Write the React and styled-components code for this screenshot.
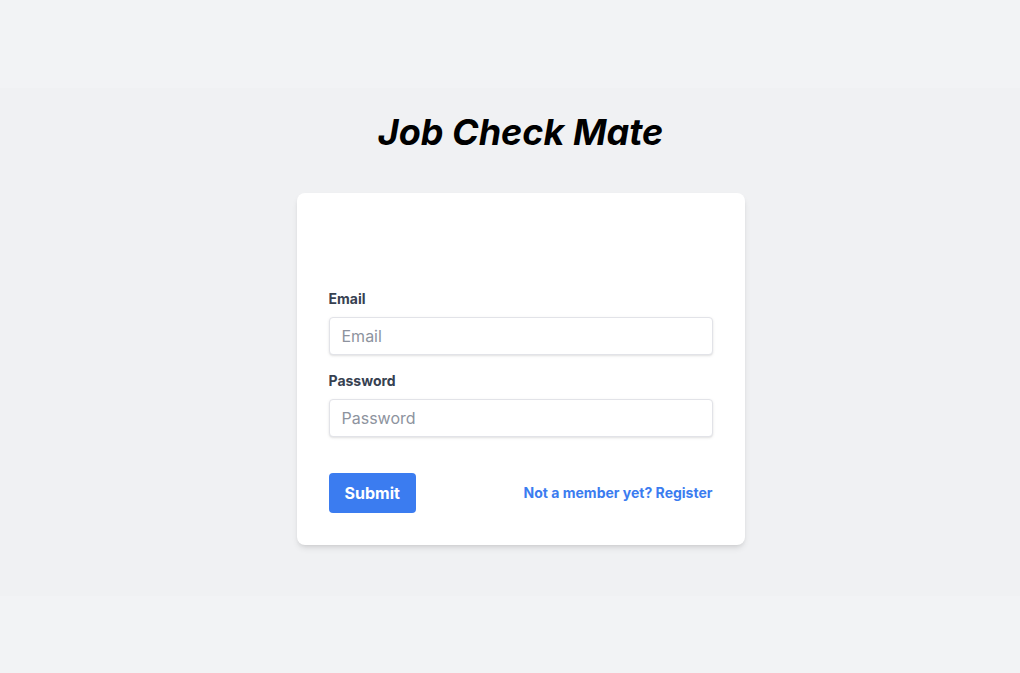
import React from "react";
import styled, { createGlobalStyle } from "styled-components";

const Global = createGlobalStyle`
  html, body { margin: 0; padding: 0; background: #f2f3f5; }
  body { font-family: Inter, "Noto Sans", "Liberation Sans", sans-serif; -webkit-font-smoothing: antialiased; }
  * { box-sizing: border-box; }
`;

const Page = styled.div`
  min-height: 673px;
  padding-top: 88px;
`;

const Band = styled.main`
  background: #f0f1f3;
  height: 508px;
  padding: 24px 0 0 21px;
  display: flex;
  flex-direction: column;
  align-items: center;
`;

const Title = styled.h1`
  margin: 0 0 41px;
  font-size: 36px;
  line-height: 40px;
  font-weight: 700;
  font-style: italic;
  color: #000;
  letter-spacing: 0;
`;

const Card = styled.form`
  width: 448px;
  background: #fff;
  border-radius: 8px;
  box-shadow: 0 4px 6px -1px rgba(0,0,0,0.1), 0 2px 4px -2px rgba(0,0,0,0.1);
  padding: 24px 32px 32px;
`;

const Notice = styled.div`
  height: 72px;
`;

const Field = styled.div`
  margin-bottom: ${p => p.$mb}px;
`;

const Label = styled.label`
  display: block;
  font-size: 14px;
  line-height: 20px;
  font-weight: 700;
  color: #374151;
  margin-bottom: 8px;
`;

const Input = styled.input`
  display: block;
  width: 100%;
  height: 38px;
  border: 1px solid #e2e3e8;
  border-radius: 4px;
  box-shadow: 0 1px 3px 0 rgba(0,0,0,0.1), 0 1px 2px -1px rgba(0,0,0,0.1);
  padding: 8px 12px;
  font-family: inherit;
  font-size: 16px;
  line-height: 20px;
  color: #374151;
  outline: none;
  &::placeholder { color: #8d939e; }
`;

const Actions = styled.div`
  display: flex;
  align-items: center;
  justify-content: space-between;
`;

const Button = styled.button`
  background: #3b7cf0;
  color: #fff;
  border: none;
  border-radius: 4px;
  height: 40px;
  padding: 0 16px;
  font-family: inherit;
  font-size: 16px;
  font-weight: 700;
  line-height: 24px;
  cursor: pointer;
`;

const Link = styled.a`
  display: block;
  color: #3b7cf0;
  font-size: 14px;
  line-height: 18px;
  font-weight: 700;
  text-decoration: none;
`;

export default function App() {
  return (
    <Page>
      <Global />
      <Band>
        <Title>Job Check Mate</Title>
        <Card onSubmit={e => e.preventDefault()}>
          <Notice />
          <Field $mb={16}>
            <Label htmlFor="email">Email</Label>
            <Input id="email" type="email" placeholder="Email" />
          </Field>
          <Field $mb={36}>
            <Label htmlFor="password">Password</Label>
            <Input id="password" type="password" placeholder="Password" />
          </Field>
          <Actions>
            <Button type="submit">Submit</Button>
            <Link href="#">Not a member yet? Register</Link>
          </Actions>
        </Card>
      </Band>
    </Page>
  );
}
